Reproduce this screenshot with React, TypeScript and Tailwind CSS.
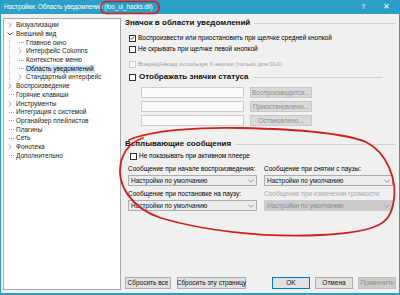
import React from 'react';

const font = { fontFamily: '"Liberation Sans", "Noto Sans", sans-serif' };

type Node = { label: string; level: 0 | 1; arrow?: 'open' | 'closed'; selected?: boolean };

const tree: Node[] = [
  { label: 'Визуализации', level: 0, arrow: 'closed' },
  { label: 'Внешний вид', level: 0, arrow: 'open' },
  { label: 'Главное окно', level: 1 },
  { label: 'Интерфейс Columns', level: 1, arrow: 'closed' },
  { label: 'Контекстное меню', level: 1 },
  { label: 'Область уведомлений', level: 1, selected: true },
  { label: 'Стандартный интерфейс', level: 1, arrow: 'closed' },
  { label: 'Воспроизведение', level: 0, arrow: 'closed' },
  { label: 'Горячие клавиши', level: 0 },
  { label: 'Инструменты', level: 0, arrow: 'closed' },
  { label: 'Интеграция с системой', level: 0 },
  { label: 'Органайзер плейлистов', level: 0 },
  { label: 'Плагины', level: 0 },
  { label: 'Сеть', level: 0 },
  { label: 'Фонотека', level: 0, arrow: 'closed' },
  { label: 'Дополнительно', level: 0 },
];

function Arrow({ open }: { open: boolean }) {
  return (
    <svg width="6" height="6" viewBox="0 0 6 6" className="shrink-0">
      {open ? (
        <path d="M0.5 1.5 L3 4 L5.5 1.5" fill="none" stroke="#555" strokeWidth="0.9" />
      ) : (
        <path d="M1.8 0.5 L4.2 3 L1.8 5.5" fill="none" stroke="#999" strokeWidth="0.9" />
      )}
    </svg>
  );
}

function Connector({ arrow }: { arrow?: 'open' | 'closed' }) {
  if (arrow) {
    return (
      <div className="w-[10px] h-full flex items-center justify-start pl-[2px]">
        <Arrow open={arrow === 'open'} />
      </div>
    );
  }
  return (
    <div className="w-[10px] h-full flex items-center">
      <div className="ml-[4px] w-[5px] border-t border-dotted border-[#a0a0a0]" />
    </div>
  );
}

function TreeRow({ node }: { node: Node }) {
  return (
    <div className="flex items-center h-[8.7px]">
      {node.level === 1 && (
        <div className="w-[10px] h-full flex">
          <div className="ml-[4px] h-full border-l border-dotted border-[#c0c0c0]" />
        </div>
      )}
      <Connector arrow={node.arrow} />
      <span
        className={`px-[1px] leading-[8px] whitespace-nowrap ${node.selected ? 'bg-[#cce8ff] text-black' : 'text-[#222]'}`}
      >
        {node.label}
      </span>
    </div>
  );
}

function CheckBox({ checked, disabled }: { checked?: boolean; disabled?: boolean }) {
  return (
    <div
      className={`w-[7px] h-[7px] border shrink-0 bg-white flex items-center justify-center ${disabled ? 'border-[#cccccc]' : 'border-[#333]'}`}
    >
      {checked && (
        <svg width="6" height="6" viewBox="0 0 6 6">
          <path d="M0.8 3 L2.3 4.6 L5.2 1.2" fill="none" stroke="#222" strokeWidth="0.9" />
        </svg>
      )}
    </div>
  );
}

function SectionHeader({ title, check }: { title: string; check?: boolean }) {
  return (
    <div className="flex items-center gap-[3px] h-[10px]">
      {check && <CheckBox />}
      <span className="text-[8px] font-bold text-[#111] whitespace-nowrap">{title}</span>
      <div className="flex-1 border-t border-[#d0d0d0] ml-[1px]" />
    </div>
  );
}

function CheckRow({ label, checked, disabled, className = '' }: { label: string; checked?: boolean; disabled?: boolean; className?: string }) {
  return (
    <div className={`flex items-center gap-[2px] h-[8px] ${disabled ? 'text-[#a0a0a0]' : ''} ${className}`}>
      <CheckBox checked={checked} disabled={disabled} />
      <span className={`whitespace-nowrap ${disabled ? 'text-[6px]' : ''}`}>{label}</span>
    </div>
  );
}

function Select({ disabled }: { disabled?: boolean }) {
  return (
    <div
      className={`h-[11px] flex items-center justify-between px-[2px] border ${disabled ? 'bg-[#cccccc] border-[#cccccc] text-[#8d8d8d]' : 'bg-[#ebebeb] border-[#adadad] text-[#111]'}`}
    >
      <span className="whitespace-nowrap">Настройки по умолчанию</span>
      <svg width="6" height="4" viewBox="0 0 6 4">
        <path d="M0.5 0.8 L3 3.2 L5.5 0.8" fill="none" stroke={disabled ? '#999' : '#777'} strokeWidth="0.7" />
      </svg>
    </div>
  );
}

function Btn({ label, w, primary, disabled }: { label: string; w: string; primary?: boolean; disabled?: boolean }) {
  return (
    <div
      className={`${w} h-[12px] flex items-center justify-center whitespace-nowrap ${primary ? 'border border-[#0078d7] bg-[#e1e1e1] text-[#111]' : disabled ? 'border border-[#bfbfbf] bg-[#cccccc] text-[#8d8d8d]' : 'border border-[#adadad] bg-[#e1e1e1] text-[#111]'}`}
    >
      {label}
    </div>
  );
}

function StatusRow({ label }: { label: string }) {
  return (
    <div className="flex items-center gap-[6px] pl-[16px] h-[11px]">
      <div className="w-[103px] h-[11px] border border-[#cccccc] bg-[#f9f9f9]" />
      <div className="w-[62px] h-[11px] border border-[#c8c8c8] bg-[#d9d9d9] text-[#909090] flex items-center justify-center">
        {label}
      </div>
    </div>
  );
}

export default function App() {
  return (
    <div className="relative w-[400px] h-[295px] bg-[#f0f0f0] overflow-hidden text-[6.5px] flex flex-col border-x border-[#2a9cc6]" style={font}>
      {/* title bar */}
      <div className="h-[14px] bg-[#2b9fc7] flex items-center text-white text-[6.5px] tracking-[-0.15px] pl-[3px] shrink-0">
        <span className="flex-1 whitespace-nowrap">Настройки: Область уведомлений (foo_ui_hacks.dll)</span>
        <span className="w-[22px] text-center text-[7px]">?</span>
        <span className="w-[25px] text-center text-[8px]">✕</span>
      </div>

      <div className="flex-1 flex min-h-0">
        {/* tree */}
        <div className="w-[118px] ml-[2px] mt-[4px] mb-[3px] bg-white border border-[#a8a8a8] pt-[2px] pl-[1px] shrink-0">
          {tree.map((n) => (
            <TreeRow key={n.label} node={n} />
          ))}
        </div>

        {/* settings */}
        <div className="flex-1 flex flex-col pl-[4px] pr-[3px] pt-[4px] pb-[4px]">
          <SectionHeader title="Значок в области уведомлений" />
          <div className="flex flex-col pl-[4px]">
            <CheckRow className="mt-[6px]" checked label="Воспроизвести или приостановить при щелчке средней кнопкой" />
            <CheckRow className="mt-[3px]" label="Не скрывать при щелчке левой кнопкой" />
            <CheckRow className="mt-[7px]" disabled label="Вперёд/Назад используя X-кнопки (только для DUI)" />
          </div>
          <div className="mt-[4px] pl-[4px] pr-[14px]">
            <SectionHeader title="Отображать значки статуса" check />
          </div>
          <div className="flex flex-col gap-[3px] mt-[5px]">
            <StatusRow label="Воспроизводится..." />
            <StatusRow label="Приостановлено..." />
            <StatusRow label="Остановлено..." />
          </div>

          <div className="mt-[13px]">
            <SectionHeader title="Всплывающие сообщения" />
          </div>
          <CheckRow className="mt-[3px] pl-[5px]" label="Не показывать при активном плеере" />
          <div className="grid grid-cols-2 gap-x-[7px] pl-[3px] pr-[3px] mt-[5px]">
            <div className="flex flex-col gap-[2px]">
              <span className="h-[8px] leading-[8px]">Сообщение при начале воспроизведения:</span>
              <Select />
            </div>
            <div className="flex flex-col gap-[2px]">
              <span className="h-[8px] leading-[8px]">Сообщение при снятии с паузы:</span>
              <Select />
            </div>
            <div className="flex flex-col gap-[2px] mt-[4px]">
              <span className="h-[8px] leading-[8px]">Сообщение при постановке на паузу:</span>
              <Select />
            </div>
            <div className="flex flex-col gap-[2px] mt-[4px]">
              <span className="h-[8px] leading-[8px] text-[#a8a8a8]">Сообщение при изменении громкости:</span>
              <Select disabled />
            </div>
          </div>

          <div className="flex-1" />
          <div className="flex items-center">
            <Btn label="Сбросить все" w="w-[46px]" />
            <div className="w-[6px]" />
            <Btn label="Сбросить эту страницу" w="w-[69px]" />
            <div className="flex-1" />
            <Btn label="OK" w="w-[38px]" primary />
            <div className="w-[5px]" />
            <Btn label="Отмена" w="w-[38px]" />
            <div className="w-[5px]" />
            <Btn label="Применить" w="w-[38px]" disabled />
          </div>
        </div>
      </div>
      <div className="h-[2px] bg-[#2a9cc6] shrink-0" />

      {/* hand-drawn red annotations */}
      <svg className="absolute inset-0 pointer-events-none" width="400" height="295" viewBox="0 0 400 295">
        <rect x="100" y="1.5" width="58" height="12" rx="5" fill="none" stroke="#d11f1f" strokeWidth="1.6" />
        <path
          d="M128 140 C150 130 200 127 240 128 C290 129 340 132 365 142 C385 152 398 180 392 205 C388 222 380 232 320 235 C260 238 200 230 160 218 C130 208 115 185 120 162 C123 150 130 142 142 138"
          fill="none"
          stroke="#d11f1f"
          strokeWidth="1.8"
          strokeLinecap="round"
        />
      </svg>
    </div>
  );
}
